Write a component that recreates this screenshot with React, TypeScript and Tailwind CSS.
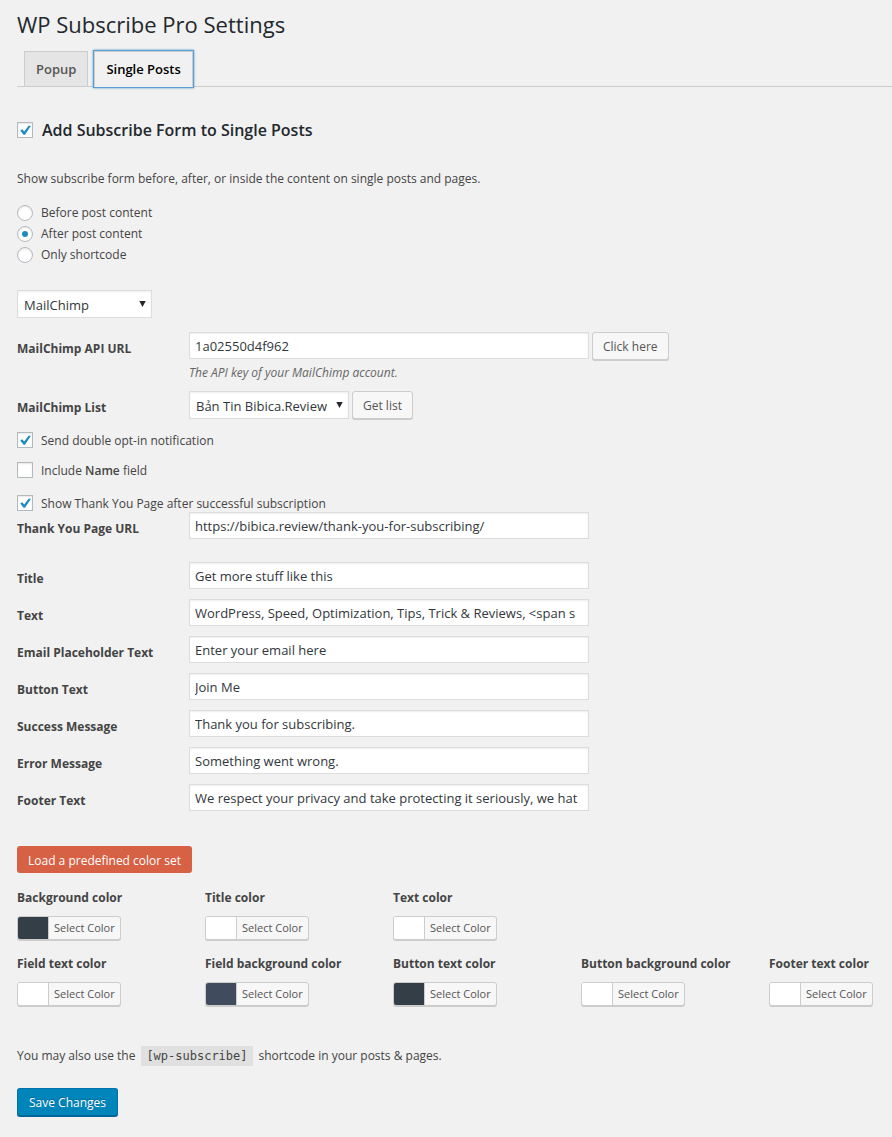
import { useState } from "react";
import type { ReactNode } from "react";

const textInput =
  "block h-[27px] w-[400px] min-w-0 border border-[#ddd] bg-white px-[5px] text-[13px] text-[#32373c] shadow-[inset_0_1px_2px_rgba(0,0,0,0.07)] outline-none focus:border-[#5b9dd9]";

const grayButton =
  "h-7 shrink-0 cursor-pointer rounded-[3px] border border-[#ccc] bg-[#f7f7f7] px-[10px] pt-0.5 text-[12px] text-[#555] shadow-[0_1px_0_#ccc]";

function Checkbox({ id, defaultChecked }: { id: string; defaultChecked?: boolean }) {
  return (
    <span className="grid size-4 shrink-0 place-items-center">
      <input
        id={id}
        type="checkbox"
        defaultChecked={defaultChecked}
        className="peer col-start-1 row-start-1 size-4 appearance-none border border-[#b4b9be] bg-white shadow-[inset_0_1px_2px_rgba(0,0,0,0.1)]"
      />
      <svg
        viewBox="0 0 16 16"
        className="pointer-events-none z-10 col-start-1 row-start-1 hidden size-4 peer-checked:block"
        aria-hidden="true"
      >
        <path d="M3.2 8.4 L5.2 7.2 L7.2 9.5 L11.8 3.4 L13.8 3.9 L8 12.8 L6.6 12.8 Z" fill="#1e8cbe" />
      </svg>
    </span>
  );
}

function CheckRow({
  id,
  defaultChecked,
  children,
}: {
  id: string;
  defaultChecked?: boolean;
  children: ReactNode;
}) {
  return (
    <div className="flex h-4 items-center gap-2">
      <Checkbox id={id} defaultChecked={defaultChecked} />
      <label htmlFor={id} className="pt-0.5">
        {children}
      </label>
    </div>
  );
}

function Dropdown({
  id,
  label,
  options,
  width,
}: {
  id: string;
  label?: string;
  options: string[];
  width: string;
}) {
  return (
    <span className={`grid items-center ${width}`}>
      <select
        id={id}
        aria-label={label}
        className="col-start-1 row-start-1 h-7 w-full appearance-none border border-[#ddd] bg-white pt-0.5 pr-5 pl-[6px] text-[13px] text-[#32373c] shadow-[inset_0_1px_2px_rgba(0,0,0,0.07)]"
      >
        {options.map((option) => (
          <option key={option}>{option}</option>
        ))}
      </select>
      <svg
        viewBox="0 0 7 6"
        className="pointer-events-none z-10 col-start-1 row-start-1 mr-[6px] h-[6px] w-[7px] justify-self-end"
        aria-hidden="true"
      >
        <path d="M0.3 0 H6.7 L3.5 6 Z" fill="#23282d" />
      </svg>
    </span>
  );
}

function Field({ id, label, value }: { id: string; label: string; value: string }) {
  return (
    <div className="flex h-[27px]">
      <label htmlFor={id} className="w-[172px] shrink-0 pt-[9px] font-bold">
        {label}
      </label>
      <input id={id} type="text" defaultValue={value} className={textInput} />
    </div>
  );
}

function ColorField({ label, swatch }: { label: string; swatch: string }) {
  return (
    <div className="w-[188px] last:w-auto">
      <div className="font-bold whitespace-nowrap">{label}</div>
      <button
        type="button"
        aria-label={`${label}: Select Color`}
        className="mt-[10px] flex h-6 cursor-pointer overflow-hidden rounded-[3px] border border-[#ccc] bg-[#f7f7f7] text-[11px] leading-[22px] text-[#555] shadow-[0_1px_0_#ccc]"
      >
        <span className={`h-full w-[30px] ${swatch}`} />
        <span className="border-l border-[#ccc] px-[5px]">Select Color</span>
      </button>
    </div>
  );
}

const placements = ["Before post content", "After post content", "Only shortcode"];

const messages = [
  { id: "title", label: "Title", value: "Get more stuff like this" },
  {
    id: "text",
    label: "Text",
    value: "WordPress, Speed, Optimization, Tips, Trick & Reviews, <span s",
  },
  { id: "email", label: "Email Placeholder Text", value: "Enter your email here" },
  { id: "button", label: "Button Text", value: "Join Me" },
  { id: "success", label: "Success Message", value: "Thank you for subscribing." },
  { id: "error", label: "Error Message", value: "Something went wrong." },
  {
    id: "footer",
    label: "Footer Text",
    value: "We respect your privacy and take protecting it seriously, we hat",
  },
];

export default function App() {
  const [placement, setPlacement] = useState("After post content");

  return (
    <main className="min-h-screen bg-[#f1f1f1] pt-[9px] pb-5 pl-[17px] font-['Open_Sans','Noto_Sans',sans-serif] text-[12px] leading-4 text-[#444]">
      <h1 className="text-[22px] leading-[30px] font-normal text-[#23282d]">WP Subscribe Pro Settings</h1>

      <nav className="mt-3 flex gap-[6px] border-b border-[#ccc] pl-[7px] text-[13px] leading-6 font-semibold">
        <a href="#popup" className="border border-b-0 border-[#ccc] bg-[#e5e5e5] px-[11px] py-[5px] text-[#555]">
          Popup
        </a>
        <a
          href="#single-posts"
          aria-current="page"
          className="-mb-px border border-[#ccc] border-b-[#f1f1f1] bg-[#f1f1f1] px-[11px] py-[5px] text-black shadow-[0_0_0_1px_#5b9dd9,0_0_2px_1px_rgba(30,140,190,0.8)]"
        >
          Single Posts
        </a>
      </nav>

      <form onSubmit={(event) => event.preventDefault()}>
        <div className="mt-[33px] flex h-5 items-center gap-[9px]">
          <Checkbox id="enable" defaultChecked />
          <label htmlFor="enable" className="text-[16px] leading-5 font-semibold text-[#23282d]">
            Add Subscribe Form to Single Posts
          </label>
        </div>

        <p className="mt-[31px]">
          Show subscribe form before, after, or inside the content on single posts and pages.
        </p>

        <fieldset className="mt-[15px] flex flex-col">
          {placements.map((name) => (
            <label key={name} className="flex h-[21px] items-center gap-2">
              <input
                type="radio"
                name="placement"
                checked={placement === name}
                onChange={() => setPlacement(name)}
                className="grid size-4 appearance-none place-items-center rounded-full border border-[#b4b9be] bg-white shadow-[inset_0_1px_2px_rgba(0,0,0,0.1)] before:size-[6px] before:rounded-full checked:before:bg-[#1e8cbe]"
              />
              {name}
            </label>
          ))}
        </fieldset>

        <div className="mt-[25px] flex">
          <Dropdown
            id="service"
            label="Mailing service"
            options={["MailChimp", "Aweber", "GetResponse"]}
            width="w-[135px]"
          />
        </div>

        <div className="mt-[14px] flex">
          <label htmlFor="api" className="w-[172px] shrink-0 pt-[9px] font-bold">
            MailChimp API URL
          </label>
          <div>
            <div className="flex gap-[3px]">
              <input id="api" type="text" defaultValue="1a02550d4f962" className={textInput} />
              <button type="button" className={grayButton}>
                Click here
              </button>
            </div>
            <p className="mt-[5px] text-[#666] italic">The API key of your MailChimp account.</p>
          </div>
        </div>

        <div className="mt-[10px] flex">
          <label htmlFor="list" className="w-[172px] shrink-0 pt-[9px] font-bold">
            MailChimp List
          </label>
          <div className="flex gap-[3px]">
            <Dropdown id="list" options={["Bản Tin Bibica.Review"]} width="w-[160px]" />
            <button type="button" className={grayButton}>
              Get list
            </button>
          </div>
        </div>

        <div className="mt-[13px] flex flex-col gap-[14px]">
          <CheckRow id="double" defaultChecked>
            Send double opt-in notification
          </CheckRow>
          <CheckRow id="name">
            Include <span className="font-semibold">Name</span> field
          </CheckRow>
        </div>
        <div className="mt-[17px] mb-px">
          <CheckRow id="thanks" defaultChecked>
            Show Thank You Page after successful subscription
          </CheckRow>
        </div>
        <Field id="thanks-url" label="Thank You Page URL" value="https://bibica.review/thank-you-for-subscribing/" />

        <div className="mt-[23px] flex flex-col gap-[10px]">
          {messages.map((field) => (
            <Field key={field.id} {...field} />
          ))}
        </div>

        <button
          type="button"
          className="mt-[35px] block h-[27px] cursor-pointer rounded-[3px] bg-[#d66145] px-[11px] pt-0.5 text-[12px] text-white"
        >
          Load a predefined color set
        </button>

        <div className="mt-[17px] flex flex-wrap">
          <ColorField label="Background color" swatch="bg-[#343e47]" />
          <ColorField label="Title color" swatch="bg-white" />
          <ColorField label="Text color" swatch="bg-white" />
        </div>
        <div className="mt-4 flex flex-wrap">
          <ColorField label="Field text color" swatch="bg-white" />
          <ColorField label="Field background color" swatch="bg-[#414b5e]" />
          <ColorField label="Button text color" swatch="bg-[#343e47]" />
          <ColorField label="Button background color" swatch="bg-white" />
          <ColorField label="Footer text color" swatch="bg-white" />
        </div>

        <p className="mt-10 flex items-center gap-[6px] leading-5">
          You may also use the
          <code className="bg-[#e0e0e0] px-[5px] font-['DejaVu_Sans_Mono','Liberation_Mono',monospace] text-[12px]">
            [wp-subscribe]
          </code>
          shortcode in your posts &amp; pages.
        </p>

        <button
          type="submit"
          className="mt-[22px] block h-7 cursor-pointer rounded-[3px] border border-[#0073aa] border-b-[#006799] bg-[#0085ba] px-[11px] pt-0.5 text-[12px] text-white shadow-[0_1px_0_#006799] text-shadow-[0_-1px_1px_#006799]"
        >
          Save Changes
        </button>
      </form>
    </main>
  );
}
